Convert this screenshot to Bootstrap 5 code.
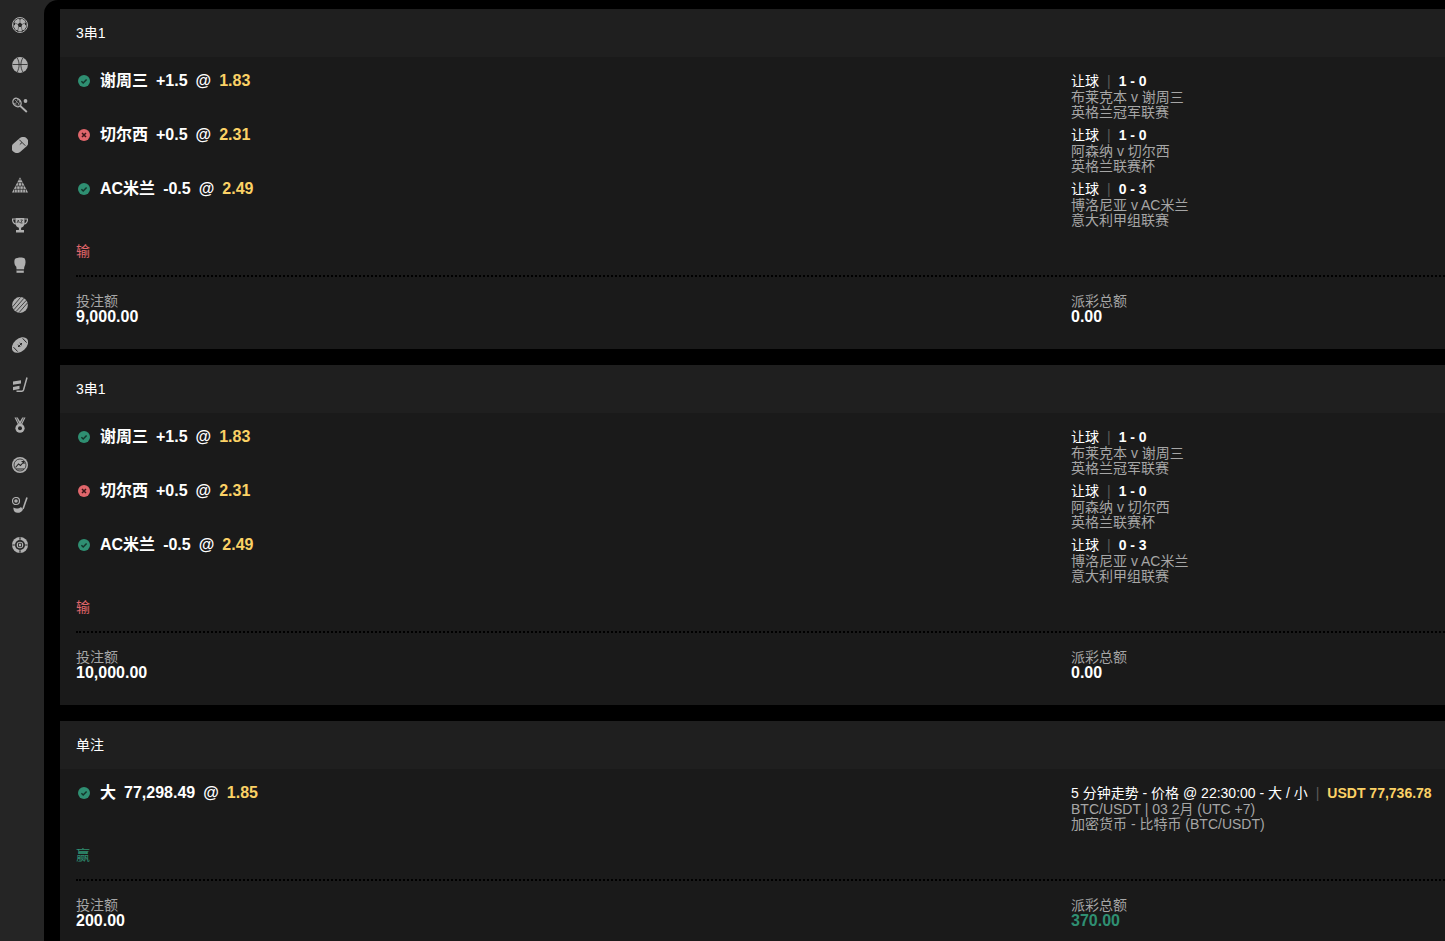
<!DOCTYPE html>
<html lang="zh">
<head>
  <meta charset="UTF-8" />
  <meta name="viewport" content="width=device-width, initial-scale=1.0" />
  <title>投注记录</title>
  <link href="https://cdn.jsdelivr.net/npm/bootstrap@5.3.0/dist/css/bootstrap.min.css" rel="stylesheet" />
  <style>
    html, body {
      height: 100%;
      overflow: hidden;
    }

    body {
      background: #252525;
      color: #fff;
      font-family: "Liberation Sans", "Noto Sans CJK SC", sans-serif;
      font-size: 14px;
      line-height: 15px;
    }

    .side-rail {
      width: 44px;
      background: #252525;
      padding: 5px 4px 0 0;
    }

    .side-icon {
      height: 40px;
      color: #b0b0b0;
    }

    .main-area {
      background: #000;
      border-top-left-radius: 14px;
      padding: 9px 0 0 16px;
      width: 1401px;
      margin-right: -16px;
    }

    .bet-card {
      width: 1400px;
      background: #1a1a1a;
      margin-bottom: 16px;
    }

    .bet-head {
      height: 48px;
      padding-left: 16px;
      background: #1f1f1f;
    }

    .bet-body {
      padding: 17px 0 0 16px;
    }

    .left-col {
      width: 995px;
    }

    .leg-row {
      height: 45px;
      margin-bottom: 9px;
    }

    .pick-line {
      font-size: 16px;
      font-weight: 700;
      line-height: 14px;
      padding-left: 2px;
      height: 14px;
    }

    .pick-line svg {
      margin-right: 10px;
      vertical-align: -1px;
    }

    .pick-gap {
      margin-left: 8px;
    }

    .odds-val {
      color: #fbd165;
    }

    .leg-main {
      color: #fff;
      margin-bottom: 1px;
    }

    .leg-main b {
      font-weight: 700;
    }

    .leg-sep {
      color: #5a5a5a;
      margin: 0 8px;
    }

    .leg-sub {
      color: #a6a6a6;
    }

    .outcome {
      height: 15px;
      margin-top: 17px;
      margin-bottom: 16px;
    }

    .is-lost {
      color: #e0666b;
    }

    .is-won {
      color: #2f8f72;
    }

    .dot-line {
      border-top: 2px dotted #000;
    }

    .bet-foot {
      padding: 17px 0 25px 16px;
    }

    .foot-label {
      color: #a6a6a6;
    }

    .foot-value {
      font-size: 16px;
      font-weight: 700;
    }
  </style>
</head>

<body>
  <svg width="0" height="0" class="position-absolute">
    <symbol id="tick" viewBox="0 0 12 12">
      <circle cx="6" cy="6" r="6" fill="#2f8f72" />
      <path d="M3.4 6.200l1.800 1.800 3.400-3.600" fill="none" stroke="#14352b" stroke-width="1.500" />
    </symbol>
    <symbol id="cross" viewBox="0 0 12 12">
      <circle cx="6" cy="6" r="6" fill="#e0666b" />
      <path d="M4 4l4 4M8 4l-4 4" fill="none" stroke="#3a1518" stroke-width="1.500" />
    </symbol>
  </svg>

  <div class="d-flex vh-100">
    <div class="side-rail flex-shrink-0" id="rail"></div>
    <div class="main-area flex-shrink-0" id="bets"></div>
  </div>

  <script>
    // sport icons, all on a 16 box, top to bottom
    const railIcons = [
      // football
      '<circle cx="8" cy="8" r="7.500" fill="none" stroke="currentColor"/><circle cx="8" cy="8" r="6.500" fill="currentColor"/><path d="M8 5.600l2.300 1.700-.9 2.700H6.600l-.9-2.700zM6.300 1.700L8 2.800l1.700-1.100L8 1.200zM1.500 7.300l1.400 1.200.4-2.300-.9-1zM14.500 7.300l-1.400 1.200-.4-2.300.9-1zM3.900 12.900l2 .4.700 1.300-1.700-.4zM12.100 12.900l-2 .4-.7 1.300 1.700-.4z" fill="#252525"/><path d="M8 2.800v2.800M3.300 6l2.400 1.300M12.700 6l-2.400 1.300M5.900 13.300l.7-3.300M10.100 13.300l-.7-3.300" stroke="#252525" stroke-width=".5"/>',
      // basketball
      '<circle cx="8" cy="8" r="7.900" fill="currentColor"/><path d="M.5 7.500h15M5 .8c2.800 4 2.800 10 0 14.400M11 .8c-2.800 4-2.800 10 0 14.400" fill="none" stroke="#252525" stroke-width=".8"/>',
      // tennis
      '<ellipse cx="5" cy="5.500" rx="3.700" ry="4.600" transform="rotate(-40 5 5.500)" fill="none" stroke="currentColor" stroke-width="1.400"/><path d="M3 3l4.500 4.500M2 6l3.500 3M5.500 2l3 3M6 8.500l2-5M3.500 7l2.500-5" stroke="currentColor" stroke-width=".6"/><path d="M8.300 9l6.500 6" stroke="currentColor" stroke-width="1.800"/><circle cx="13.500" cy="4" r="1.900" fill="currentColor"/>',
      // mouse
      '<rect x="-1.500" y="2.700" width="19" height="10.600" rx="5.300" transform="rotate(-42 8 8)" fill="currentColor"/><path d="M7.300 2.700l6 6M10 5.500L7.800 7.500" stroke="#252525" stroke-width=".9" fill="none"/>',
      // snooker rack
      '<path d="M8 .3L16 15.600H0z" fill="currentColor"/><path d="M1.700 12.300h12.600M3.400 9h9.200M5.200 5.700h5.600M6.800 2.800h2.400M2.600 15.600v-3.300M5.200 15.600v-3.300M8 15.600v-3.300M10.800 15.600v-3.300M13.400 15.600v-3.300M4.800 12.300V9M8 12.300V9M11.200 12.300V9M6.400 9V5.700M9.600 9V5.700" stroke="#252525" stroke-width=".7"/>',
      // trophy
      '<path d="M3.500 1h9v5c0 3-2 4.500-3.400 4.800V13H12v2.500H4V13h2.900v-2.200C5.500 10.500 3.500 9 3.500 6z" fill="currentColor"/><path d="M3.500 2H.5c0 3 1 4.600 3.500 5M12.500 2h3c0 3-1 4.600-3.500 5" fill="none" stroke="currentColor" stroke-width="1.200"/><path d="M5 6l1.300-3 1 3M8.500 3h2l-2 3h2" fill="none" stroke="#252525" stroke-width=".7"/>',
      // boxing glove
      '<path d="M3 2C4.500 .4 10.500 0 12.500 1.200c1.500 1.800 1.400 5.800-.2 8.800l-.3 2.600H4.600l-.3-2.900C2.300 8.500 1.800 3.800 3 2z" fill="currentColor"/><path d="M4.500 15.800h7.300v-2.500H4.500z" fill="currentColor"/><path d="M4.500 13h7.400" stroke="#252525" stroke-width=".8"/>',
      // cricket ball
      '<circle cx="8" cy="8" r="7.900" fill="currentColor"/><path d="M1.800 12.800L12 1.200M4 14.600L14.300 3.300M.6 9.800L8.500.4M7 15.700l8.500-9.800" stroke="#252525" stroke-width=".8"/>',
      // american football
      '<ellipse cx="8" cy="8" rx="9.300" ry="6.300" transform="rotate(-42 8 8)" fill="currentColor"/><path d="M10.700 1.400l3.900 4.200M1.500 10.200l4.200 4.400M6 10l4-4M6 7.700l2.300 2.300M7.700 6l2.300 2.300" fill="none" stroke="#252525" stroke-width="1"/>',
      // ice hockey
      '<path d="M15 .5l-3.500 12.500c-.3.900-.8 1.300-1.700 1.300H4.500" fill="none" stroke="currentColor" stroke-width="1.500"/><path d="M1 4.500l8-1.300v3.300l-8 1.300zM1 10l6.500-1.300v3.300L1 13.300z" fill="currentColor"/>',
      // medal
      '<path d="M2.500 .5h3.200L8 4.500 10.300 .5h3.200L10 7.500H6z" fill="currentColor"/><circle cx="8" cy="11.200" r="4.600" fill="currentColor"/><circle cx="8" cy="11.200" r="2" fill="#252525"/><path d="M4.200 .5L7 6.500M11.800 .5L9 6.500" stroke="#252525" stroke-width=".6"/>',
      // chart coin
      '<circle cx="8" cy="8" r="8" fill="currentColor"/><circle cx="8" cy="8" r="6" fill="none" stroke="#252525" stroke-width=".8"/><path d="M3.500 10.500l3-3.500 2 1.500 3.500-4M9.500 4.500H12V7" fill="none" stroke="#252525" stroke-width="1.100"/><path d="M4 12h8" stroke="#252525"/>',
      // golf
      '<circle cx="4" cy="4" r="3.500" fill="none" stroke="currentColor" stroke-width="1.200"/><circle cx="4" cy="4" r="1.800" fill="currentColor"/><path d="M15 .5L11 12" fill="none" stroke="currentColor" stroke-width="1.600"/><path d="M1.500 10.500c2 1.500 5 1.500 7.500-.5l2 2.500c-1 2.500-3 3.300-5.500 3.300C3 15.800 1 13.500 1.500 10.500z" fill="currentColor"/>',
      // casino chip
      '<circle cx="8" cy="8" r="8" fill="currentColor"/><circle cx="8" cy="8" r="5" fill="#252525"/><circle cx="8" cy="8" r="3.300" fill="currentColor"/><path d="M8 .3v2.500M8 13.200v2.500M.3 8h2.500M13.200 8h2.500" stroke="#252525" stroke-width="1.200"/><path d="M6.500 6.300h3v3.400h-3z" fill="none" stroke="#252525" stroke-width=".9"/>'
    ];

    const parlay = (stake) => ({
      title: '3串1',
      legs: [
        { ok: true, name: '谢周三', line: '+1.5', odds: '1.83', market: '让球', score: '1 - 0', match: '布莱克本 v 谢周三', league: '英格兰冠军联赛' },
        { ok: false, name: '切尔西', line: '+0.5', odds: '2.31', market: '让球', score: '1 - 0', match: '阿森纳 v 切尔西', league: '英格兰联赛杯' },
        { ok: true, name: 'AC米兰', line: '-0.5', odds: '2.49', market: '让球', score: '0 - 3', match: '博洛尼亚 v AC米兰', league: '意大利甲组联赛' }
      ],
      result: '输', won: false, stake: stake, payout: '0.00'
    });

    const bets = [
      parlay('9,000.00'),
      parlay('10,000.00'),
      {
        title: '单注',
        legs: [
          { ok: true, name: '大', line: '77,298.49', odds: '1.85', market: '5 分钟走势 - 价格 @ 22:30:00 - 大 / 小', score: 'USDT 77,736.78', gold: true, match: 'BTC/USDT | 03 2月 (UTC +7)', league: '加密货币 - 比特币 (BTC/USDT)' }
        ],
        result: '赢', won: true, stake: '200.00', payout: '370.00'
      }
    ];

    function renderRail() {
      document.getElementById('rail').innerHTML = railIcons.map((icon) =>
        `<div class="side-icon d-flex align-items-center justify-content-center">
           <svg width="16" height="16" viewBox="0 0 16 16">${icon}</svg>
         </div>`).join('');
    }

    function renderLeg(leg) {
      return `
        <div class="leg-row d-flex">
          <div class="left-col pick-line">
            <svg width="12" height="12"><use href="#${leg.ok ? 'tick' : 'cross'}" /></svg>${leg.name}<span class="pick-gap">${leg.line}</span><span class="pick-gap">@</span><span class="pick-gap odds-val">${leg.odds}</span>
          </div>
          <div>
            <div class="leg-main">${leg.market}<span class="leg-sep">|</span><b class="${leg.gold ? 'odds-val' : ''}">${leg.score}</b></div>
            <div class="leg-sub">${leg.match}</div>
            <div class="leg-sub">${leg.league}</div>
          </div>
        </div>`;
    }

    function renderBets() {
      document.getElementById('bets').innerHTML = bets.map((bet) => `
        <div class="bet-card">
          <div class="bet-head d-flex align-items-center">${bet.title}</div>
          <div class="bet-body">
            ${bet.legs.map(renderLeg).join('')}
            <div class="outcome ${bet.won ? 'is-won' : 'is-lost'}">${bet.result}</div>
            <div class="dot-line"></div>
          </div>
          <div class="bet-foot d-flex">
            <div class="left-col">
              <div class="foot-label">投注额</div>
              <div class="foot-value">${bet.stake}</div>
            </div>
            <div>
              <div class="foot-label">派彩总额</div>
              <div class="foot-value ${bet.won ? 'is-won' : ''}">${bet.payout}</div>
            </div>
          </div>
        </div>`).join('');
    }

    renderRail();
    renderBets();
  </script>
  <script src="https://cdn.jsdelivr.net/npm/bootstrap@5.3.0/dist/js/bootstrap.bundle.min.js"></script>
</body>
</html>
